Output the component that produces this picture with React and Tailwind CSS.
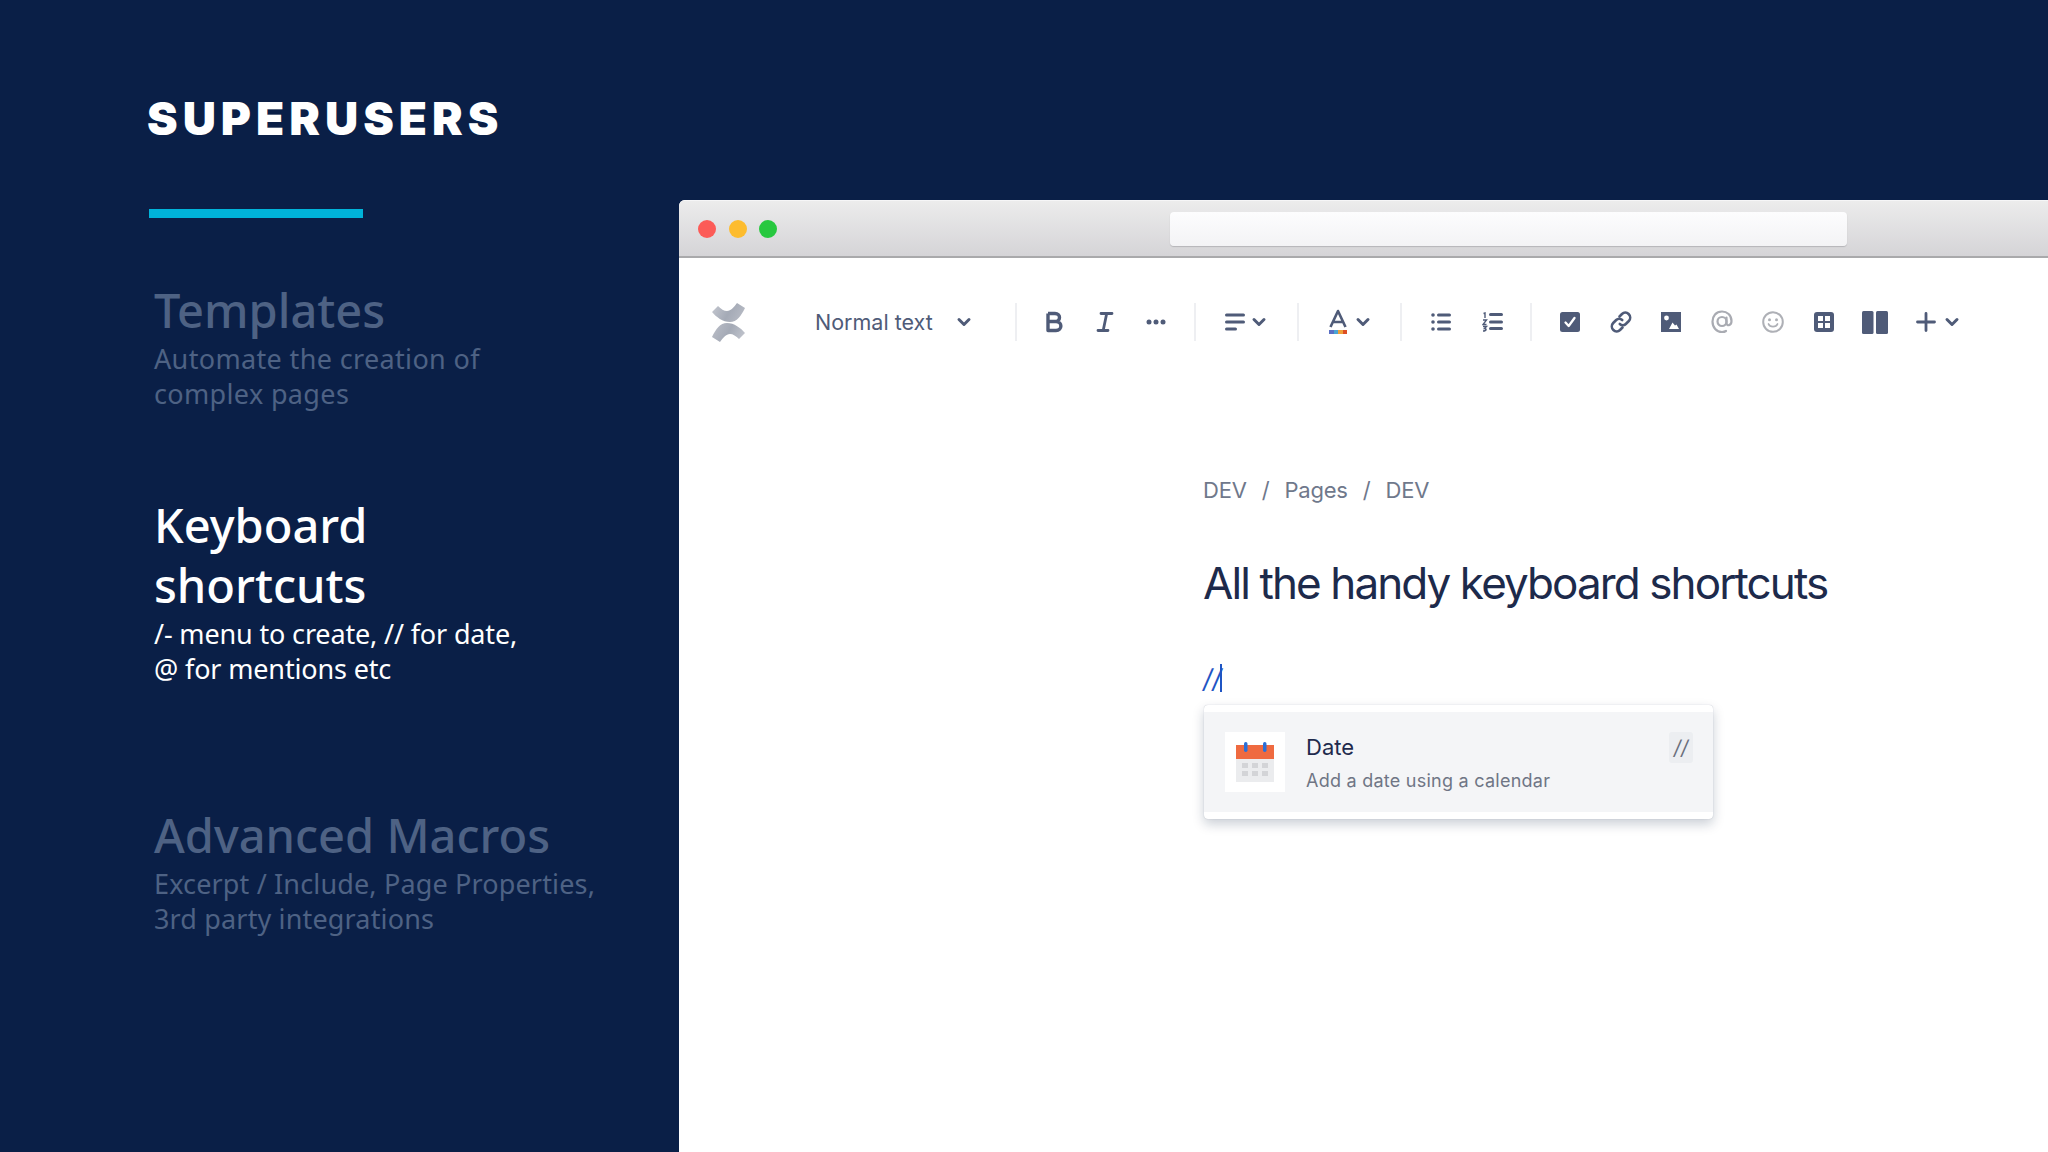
import React from 'react'

const ink = '#4f5b78'

const Chevron = ({ className = '' }) => (
  <svg width="16" height="16" viewBox="0 0 16 16" fill="none" className={className}>
    <path d="M3 5.5 L8 10.5 L13 5.5" stroke={ink} strokeWidth="3" strokeLinecap="round" strokeLinejoin="round" />
  </svg>
)

const Separator = ({ className = '' }) => <div className={`w-[2px] h-[38px] bg-[#eeeff2] ${className}`} />

// one toolbar button slot, icons sit centred in it
const Cell = ({ children }) => (
  <div className="w-[50.8px] h-[38px] flex items-center justify-center shrink-0">{children}</div>
)

const Logo = () => (
  <svg width="36" height="40" viewBox="0 0 36 40" className="shrink-0">
    <defs>
      <linearGradient id="logoSwoosh" x1="0" y1="0" x2="1" y2="0.3">
        <stop offset="0" stopColor="#c6c9d1" />
        <stop offset="0.6" stopColor="#a4aab6" />
        <stop offset="1" stopColor="#b4b8c2" />
      </linearGradient>
    </defs>
    <path d="M1 10 L7 4 C10 7 13 9 16 9 C20 9 23 5 26 1 L34 6 C30 14 26 20 19 20 C12 20 5 15 1 10 Z" fill="url(#logoSwoosh)" />
    <path d="M1 10 L7 4 C10 7 13 9 16 9 C20 9 23 5 26 1 L34 6 C30 14 26 20 19 20 C12 20 5 15 1 10 Z" fill="url(#logoSwoosh)" transform="rotate(180 17.5 20.5)" />
  </svg>
)

const BoldIcon = () => (
  <svg width="20" height="24" viewBox="0 0 20 24" fill="none">
    <path d="M4 3.5 H11 C17 3.5 17 11.5 11 11.5 H4 M4 11.5 H12 C18.5 11.5 18.5 20.5 12 20.5 H4 Z M4 3.5 V20.5" stroke={ink} strokeWidth="3.4" strokeLinejoin="round" />
  </svg>
)

const ItalicIcon = () => (
  <svg width="18" height="22" viewBox="0 0 18 22" fill="none">
    <path d="M5 2.5 H16 M2 19.5 H12 M10.7 2.5 L7.2 19.5" stroke={ink} strokeWidth="2.8" strokeLinecap="round" />
  </svg>
)

const MoreIcon = () => (
  <svg width="20" height="6" viewBox="0 0 20 6" fill={ink}>
    <circle cx="3" cy="3" r="2.5" />
    <circle cx="10" cy="3" r="2.5" />
    <circle cx="17" cy="3" r="2.5" />
  </svg>
)

const AlignIcon = () => (
  <svg width="20" height="18" viewBox="0 0 20 18" fill="none">
    <path d="M1.5 2 H18.5 M1.5 9 H18.5 M1.5 16 H10.5" stroke={ink} strokeWidth="3" strokeLinecap="round" />
  </svg>
)

const ColorIcon = () => (
  <svg width="20" height="26" viewBox="0 0 20 26" fill="none">
    <path d="M2.5 18 L10 2 L17.5 18 M5.5 13 H14.5" stroke={ink} strokeWidth="2.6" strokeLinejoin="round" />
    <rect x="1" y="21" width="5" height="4" fill="#5a6fc4" />
    <rect x="6" y="21" width="4" height="4" fill="#4aa4d4" />
    <rect x="10" y="21" width="5" height="4" fill="#eea13a" />
    <rect x="15" y="21" width="4" height="4" fill="#dd4f24" />
  </svg>
)

const BulletIcon = () => (
  <svg width="20" height="18" viewBox="0 0 20 18" fill="none">
    <path d="M7.5 2 H18.5 M7.5 9 H18.5 M7.5 16 H18.5" stroke={ink} strokeWidth="3" strokeLinecap="round" />
    <circle cx="2" cy="2" r="1.8" fill={ink} />
    <circle cx="2" cy="9" r="1.8" fill={ink} />
    <circle cx="2" cy="16" r="1.8" fill={ink} />
  </svg>
)

const NumberIcon = () => (
  <svg width="21" height="20" viewBox="0 0 21 20" fill="none">
    <path d="M8.5 2.5 H19.5 M8.5 10 H19.5 M8.5 16.5 H19.5" stroke={ink} strokeWidth="3" strokeLinecap="round" />
    <path d="M1.5 1.5 L3 1 V6 M1 8 H4.5 L1 12.5 H4.5 M1 14.5 H4.5 L2.5 16.5 C4.5 16.5 5 19 1 19" stroke={ink} strokeWidth="1.4" />
  </svg>
)

const CheckIcon = () => (
  <svg width="20" height="20" viewBox="0 0 20 20">
    <rect width="20" height="20" rx="2.5" fill={ink} />
    <path d="M5.5 10.5 L8.7 14 L14.5 6" stroke="#fff" strokeWidth="2.3" strokeLinecap="round" strokeLinejoin="round" fill="none" />
  </svg>
)

const LinkIcon = () => (
  <svg width="22" height="22" viewBox="0 0 22 22" fill="none" stroke={ink} strokeWidth="2.6" strokeLinecap="round">
    <path d="M9.5 5.5 L12 3 C14 1 16.8 1.2 18.6 3 C20.6 5 20.7 8 18.8 10 L15.8 13 C14 14.8 11.5 14.6 9.8 13" />
    <path d="M12.5 16.5 L10 19 C8 21 5.2 20.8 3.4 19 C1.4 17 1.3 14 3.2 12 L6.2 9 C8 7.2 10.5 7.4 12.2 9" />
  </svg>
)

const ImageIcon = () => (
  <svg width="20" height="20" viewBox="0 0 20 20">
    <rect width="20" height="20" fill={ink} />
    <circle cx="5.5" cy="6" r="2.4" fill="#fff" />
    <path d="M3 17 L8 17 L11.5 10.5 L14 13.5 L15.5 12.5 L18 17 Z" fill="#fff" />
  </svg>
)

const AtIcon = () => (
  <svg width="22" height="24" viewBox="0 0 22 24" fill="none" stroke="#a9abb2" strokeWidth="2.2" strokeLinecap="round">
    <circle cx="11" cy="11.5" r="4.5" />
    <path d="M15.5 7.5 V13 C15.5 16.5 20.5 16 20.5 11 C20.5 5 16 1.5 11 1.5 C5 1.5 1.5 6 1.5 11.5 C1.5 17.5 5.5 22 11 22 C12.5 22 14 21.7 15 21" />
  </svg>
)

const SmileIcon = () => (
  <svg width="22" height="22" viewBox="0 0 22 22" fill="none">
    <circle cx="11" cy="11" r="9.8" stroke="#aeb0b6" strokeWidth="2" />
    <circle cx="7.5" cy="8.8" r="1.5" fill="#aeb0b6" />
    <circle cx="14.5" cy="8.8" r="1.5" fill="#aeb0b6" />
    <path d="M6.5 13 C8 16.5 14 16.5 15.5 13" stroke="#aeb0b6" strokeWidth="1.8" strokeLinecap="round" />
  </svg>
)

const TableIcon = () => (
  <svg width="20" height="20" viewBox="0 0 20 20">
    <rect width="20" height="20" rx="3" fill={ink} />
    <rect x="4" y="4" width="5" height="5" fill="#fff" />
    <rect x="11" y="4" width="5" height="5" fill="#fff" />
    <rect x="4" y="11" width="5" height="5" fill="#fff" />
    <rect x="11" y="11" width="5" height="5" fill="#fff" />
  </svg>
)

const ColumnsIcon = () => (
  <svg width="26" height="23" viewBox="0 0 26 23" fill={ink}>
    <rect x="0" y="0" width="11.5" height="23" rx="1.5" />
    <rect x="14" y="0" width="12" height="23" rx="1.5" />
  </svg>
)

const PlusIcon = () => (
  <svg width="20" height="20" viewBox="0 0 20 20" fill="none">
    <path d="M10 1.5 V18.5 M1.5 10 H18.5" stroke={ink} strokeWidth="2.8" strokeLinecap="round" />
  </svg>
)

const CalendarIcon = () => (
  <svg width="38" height="40" viewBox="0 0 38 40">
    <rect x="0" y="17" width="38" height="23" fill="#ebecee" />
    <rect x="0" y="3" width="38" height="14" fill="#ef6a40" />
    <rect x="8" y="0" width="3.5" height="10" rx="1.7" fill="#2b6fd6" />
    <rect x="27" y="0" width="3.5" height="10" rx="1.7" fill="#2b6fd6" />
    <g fill="#d3d4d7">
      <rect x="6" y="21" width="6" height="5" />
      <rect x="16" y="21" width="6" height="5" />
      <rect x="26" y="21" width="6" height="5" />
      <rect x="6" y="29" width="6" height="5" />
      <rect x="16" y="29" width="6" height="5" />
      <rect x="26" y="29" width="6" height="5" />
    </g>
  </svg>
)

const Section = ({ title, lines, active, className = '', subClass = '' }) => (
  <div className={`font-['Noto_Sans',sans-serif] ${active ? 'text-white' : 'text-[#4e6284]'} ${className}`}>
    {title.map((t) => (
      <div key={t} className="text-[47px] leading-[60px] font-medium">{t}</div>
    ))}
    <div className={`mt-[1px] text-[27px] leading-[35px] ${subClass}`}>
      {lines.map((l) => (
        <div key={l}>{l}</div>
      ))}
    </div>
  </div>
)

export default function App() {
  return (
    <div className="w-[2048px] h-[1152px] overflow-hidden bg-[#0a1f47] flex">
      <aside className="w-[679px] shrink-0 pl-[147px] pt-[93px]">
        <h1 className="font-['Inter',sans-serif] font-black text-[46px] leading-[51px] tracking-[5px] text-white">SUPERUSERS</h1>
        <div className="mt-[65px] ml-[2px] w-[214px] h-[9px] bg-[#00b3d9]" />
        <Section className="mt-[62px] ml-[7px]" subClass="tracking-[0.35px]" title={['Templates']} lines={['Automate the creation of', 'complex pages']} />
        <Section className="mt-[84px] ml-[7px]" subClass="tracking-[-0.15px]" active title={['Keyboard', 'shortcuts']} lines={['/- menu to create, // for date,', '@ for mentions etc']} />
        <Section className="mt-[119px] ml-[7px]" subClass="tracking-[0.15px]" title={['Advanced Macros']} lines={['Excerpt / Include, Page Properties,', '3rd party integrations']} />
      </aside>

      <main className="flex-1 mt-[200px] bg-white rounded-tl-[6px] overflow-hidden font-['Inter',sans-serif]">
        <div className="h-[58px] border-b-2 border-[#a9a9ab] border-t border-t-[#f6f6f7] bg-gradient-to-b from-[#ececec] to-[#d5d4d7] flex items-center pl-[19px]">
          <div className="w-[18px] h-[18px] rounded-full bg-[#fc5b57]" />
          <div className="w-[18px] h-[18px] rounded-full bg-[#fdbc2e] ml-[12.5px]" />
          <div className="w-[18px] h-[18px] rounded-full bg-[#27c83f] ml-[12.5px]" />
          <div className="ml-[393px] w-[677px] h-[34px] rounded-[4px] bg-gradient-to-b from-[#fdfdfe] to-[#f3f3f5] shadow-[0_1px_1px_#b5b5b8]" />
        </div>

        <div className="flex items-center pl-[32px] mt-[45px] h-[38px]">
          <Logo />
          <span className="ml-[68px] text-[21.5px] text-[#4f5b78] whitespace-nowrap w-[140px]">Normal text</span>
          <Chevron className="ml-[1px]" />
          <Separator className="ml-[43px]" />
          <div className="flex ml-[12px]">
            <Cell><BoldIcon /></Cell>
            <Cell><ItalicIcon /></Cell>
            <Cell><MoreIcon /></Cell>
          </div>
          <Separator className="ml-[12.5px]" />
          <div className="flex items-center gap-[6px] ml-[29px]">
            <AlignIcon />
            <Chevron />
          </div>
          <Separator className="ml-[30px]" />
          <div className="flex items-center gap-[7px] ml-[29px]">
            <ColorIcon />
            <Chevron />
          </div>
          <Separator className="ml-[29px]" />
          <div className="flex ml-[14px]">
            <Cell><BulletIcon /></Cell>
            <Cell><NumberIcon /></Cell>
          </div>
          <Separator className="ml-[13px]" />
          <div className="flex ml-[12px]">
            <Cell><CheckIcon /></Cell>
            <Cell><LinkIcon /></Cell>
            <Cell><ImageIcon /></Cell>
            <Cell><AtIcon /></Cell>
            <Cell><SmileIcon /></Cell>
            <Cell><TableIcon /></Cell>
            <Cell><ColumnsIcon /></Cell>
          </div>
          <div className="flex items-center gap-[8px] ml-[16px]">
            <PlusIcon />
            <Chevron />
          </div>
        </div>

        <div className="ml-[524px] mt-[135px]">
          <div className="flex text-[22px] leading-[28px] tracking-[-0.2px] text-[#6f788b]">
            <span>DEV</span>
            <span className="ml-[15px]">/</span>
            <span className="ml-[15px]">Pages</span>
            <span className="ml-[15px]">/</span>
            <span className="ml-[15px]">DEV</span>
          </div>
          <h2 className="mt-[51px] text-[44px] leading-[56px] font-normal tracking-[-1.9px] text-[#1d2a4b] whitespace-nowrap">All the handy keyboard shortcuts</h2>
          <div className="mt-[53px] flex items-start h-[30px]">
            <span className="text-[26px] leading-[30px] italic text-[#1f55c4]">//</span>
            <span className="w-[2px] h-[28px] bg-[#1f55c4] -ml-[2px]" />
          </div>
          <div className="mt-[11px] ml-[1px] w-[509px] h-[114px] py-[7px] bg-white rounded-[4px] shadow-[0_5px_12px_rgba(9,30,66,0.22),0_0_1px_rgba(9,30,66,0.3)]">
            <div className="h-[100px] bg-[#f4f5f7] flex pl-[21px] pr-[20px] pt-[20px]">
              <div className="w-[60px] h-[60px] bg-white flex items-center justify-center shrink-0">
                <CalendarIcon />
              </div>
              <div className="ml-[21px] flex-1">
                <div className="text-[22px] leading-[30px] text-[#1f2a4d]">Date</div>
                <div className="mt-[6px] text-[18px] leading-[26px] tracking-[0.25px] text-[#6f7585]">Add a date using a calendar</div>
              </div>
              <div className="w-[24px] h-[31px] bg-[#eceef1] rounded-[3px] flex items-center justify-center text-[20px] italic text-[#6a6f7c]">//</div>
            </div>
          </div>
        </div>
      </main>
    </div>
  )
}
